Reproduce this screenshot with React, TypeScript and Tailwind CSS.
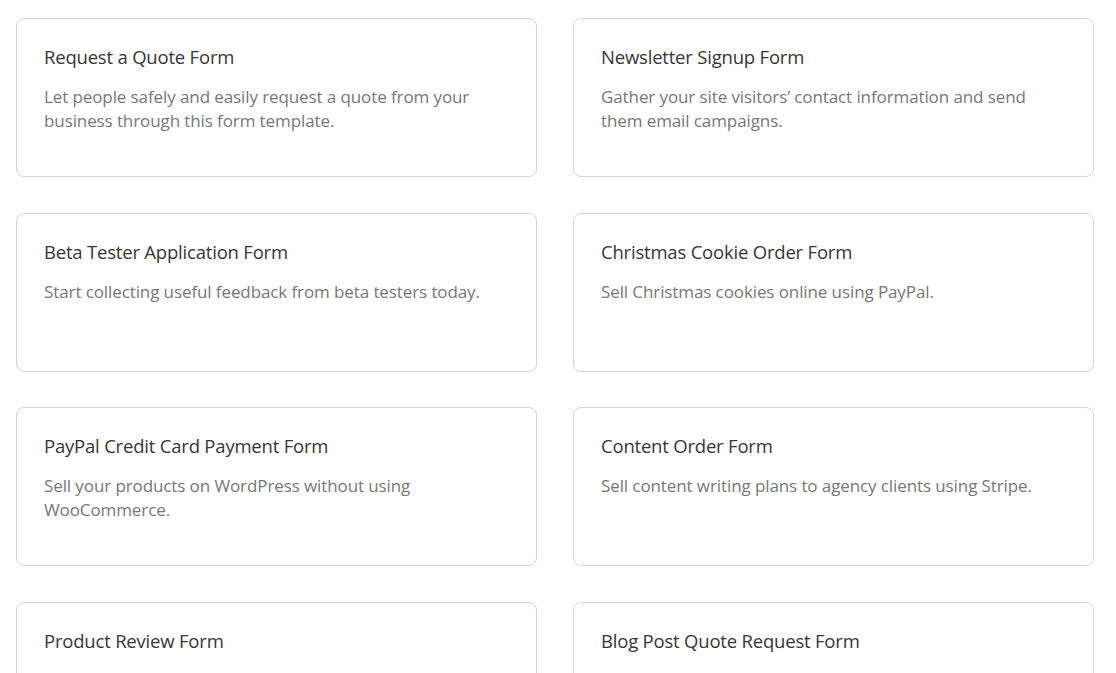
import React from 'react';

const templates = [
  {
    title: 'Request a Quote Form',
    desc: 'Let people safely and easily request a quote from your business through this form template.',
  },
  {
    title: 'Newsletter Signup Form',
    desc: 'Gather your site visitors’ contact information and send them email campaigns.',
  },
  {
    title: 'Beta Tester Application Form',
    desc: 'Start collecting useful feedback from beta testers today.',
  },
  {
    title: 'Christmas Cookie Order Form',
    desc: 'Sell Christmas cookies online using PayPal.',
  },
  {
    title: 'PayPal Credit Card Payment Form',
    desc: 'Sell your products on WordPress without using WooCommerce.',
  },
  {
    title: 'Content Order Form',
    desc: 'Sell content writing plans to agency clients using Stripe.',
  },
  {
    title: 'Product Review Form',
    desc: 'Use this product review form to collect feedback from your customers.',
  },
  {
    title: 'Blog Post Quote Request Form',
    desc: 'Use this blog post quote request form to get more leads and build your business.',
  },
];

function TemplateCard({ title, desc }: { title: string; desc: string }) {
  return (
    <div className="h-[159px] rounded-lg border border-[#d4d4d4] bg-white px-[27px] pt-[25px]">
      <h3 className="text-[18.5px] leading-[26px] font-normal text-[#363636] tracking-[-0.2px]">{title}</h3>
      <p className="mt-[15px] max-w-[460px] text-[17px] leading-6 text-[#777777] tracking-[-0.1px]">{desc}</p>
    </div>
  );
}

export default function App() {
  return (
    <div
      className="h-[673px] w-[1116px] overflow-hidden bg-white pl-4 pt-[18px]"
      style={{ fontFamily: '"Open Sans", "Noto Sans", sans-serif' }}
    >
      <div className="grid grid-cols-[521px_521px] gap-x-9 gap-y-[35.6px]">
        {templates.map((t) => (
          <TemplateCard key={t.title} title={t.title} desc={t.desc} />
        ))}
      </div>
    </div>
  );
}
